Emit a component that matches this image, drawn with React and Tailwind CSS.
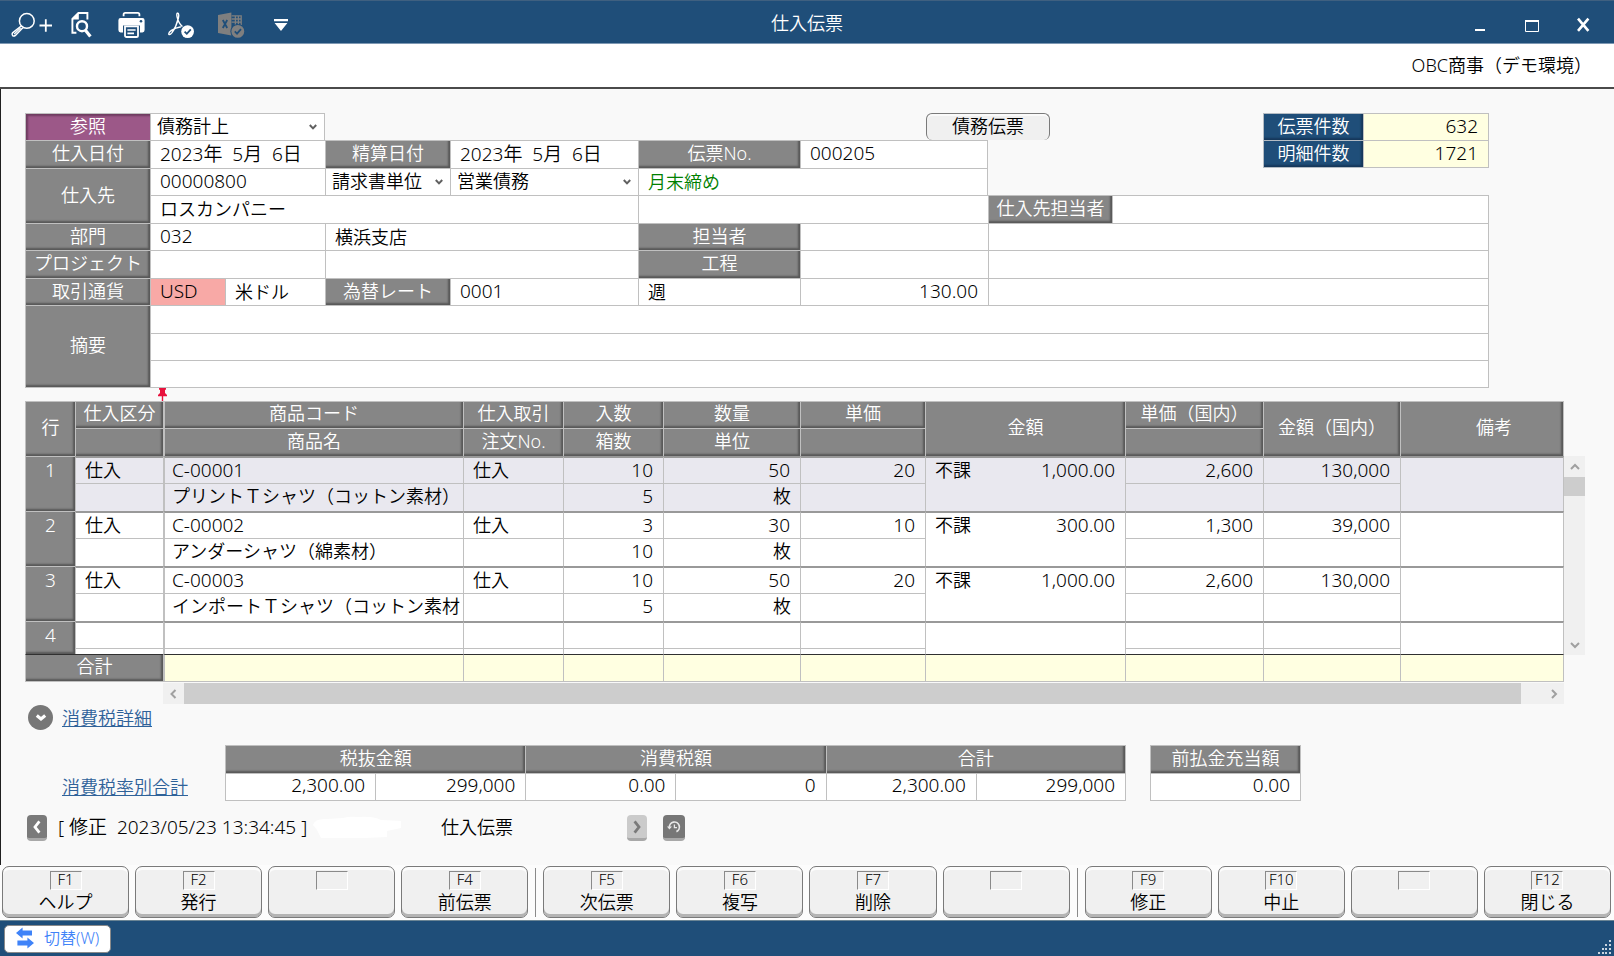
import React from 'react';

const grayHead =
  'bg-[#868686] text-white font-[350] border-t border-l border-[#c0c0c0] shadow-[inset_-3px_-3px_2px_-1px_#585858]';
const blueHead =
  'bg-[#1f4e79] text-white border-t border-l border-[#b4bcc4] shadow-[inset_-3px_-3px_2px_-1px_#16375a]';
const purpleHead =
  'bg-[#9c5888] text-white border-t border-l border-[#c0c0c0] shadow-[inset_3px_3px_2px_-1px_#6f3c60]';

const records = [
  {
    no: 1, kind: '仕入', code: 'C-00001', name: 'プリントＴシャツ（コットン素材）', trade: '仕入',
    per: '10', boxes: '5', qty: '50', unit: '枚', price: '20', tax: '不課', amount: '1,000.00',
    priceJp: '2,600', amountJp: '130,000'
  },
  {
    no: 2, kind: '仕入', code: 'C-00002', name: 'アンダーシャツ（綿素材）', trade: '仕入',
    per: '3', boxes: '10', qty: '30', unit: '枚', price: '10', tax: '不課', amount: '300.00',
    priceJp: '1,300', amountJp: '39,000'
  },
  {
    no: 3, kind: '仕入', code: 'C-00003', name: 'インポートＴシャツ（コットン素材', trade: '仕入',
    per: '10', boxes: '5', qty: '50', unit: '枚', price: '20', tax: '不課', amount: '1,000.00',
    priceJp: '2,600', amountJp: '130,000'
  },
  { no: 4 }
];

const functionKeys = [
  [['F1', 'ヘルプ'], ['F2', '発行'], ['', ''], ['F4', '前伝票']],
  [['F5', '次伝票'], ['F6', '複写'], ['F7', '削除'], ['', '']],
  [['F9', '修正'], ['F10', '中止'], ['', ''], ['F12', '閉じる']]
];

const Label = ({ htmlFor, className, tone = grayHead, children }) => (
  <label htmlFor={htmlFor} className={`flex items-center justify-center pb-[3px] ${tone} ${className}`}>
    {children}
  </label>
);

const Field = ({ id, label, value = '', className = '' }) => (
  <input
    id={id}
    aria-label={label}
    defaultValue={value}
    className={`min-w-0 w-full h-full pl-[9px] pr-[10px] pb-[3px] border-t border-l border-[#c0c0c0] outline-none ${className}`}
  />
);

const Choice = ({ id, label, options, className = '' }) => (
  <div className={`relative border-t border-l border-[#c0c0c0] bg-white ${className}`}>
    <select
      id={id}
      aria-label={label}
      className="block w-full h-full appearance-none bg-transparent pl-[6px] pr-4 pb-[4px] outline-none"
    >
      {options.map((o) => (
        <option key={o}>{o}</option>
      ))}
    </select>
    <svg viewBox="0 0 8 6" className="pointer-events-none absolute right-[7px] top-[10px] h-[6px] w-[8px]" fill="none" stroke="#606060" strokeWidth="2">
      <path d="M0.8 1 L4 4.4 L7.2 1" />
    </svg>
  </div>
);

const TitleBar = () => (
  <header className="relative flex h-[44px] items-center justify-between border-t border-b border-t-[#3f6080] border-b-[#7d98b3] bg-[#1f4e79] pt-[6px] pl-[10px] pr-[22px]">
    <div className="flex items-center">
      <button type="button" aria-label="検索" className="w-[61px]">
        <svg viewBox="0 0 44 28" className="h-[28px] w-[44px]" fill="none" stroke="#fff" strokeWidth="1.5">
          <circle cx="16.8" cy="9.9" r="7.4" />
          <path d="M11.2 15 L2.6 21.8 Q1.4 23.4 2.6 24.6 Q4 25.6 5.4 24.4 L12.8 16.8" />
          <path d="M4.2 23 L10.6 17" strokeWidth="1.2" />
          <path d="M29.5 14.5 H42 M35.8 8.2 V20.8" strokeWidth="1.8" />
        </svg>
      </button>
      <button type="button" aria-label="プレビュー" className="w-[47px]">
        <svg viewBox="0 0 22 28" className="h-[28px] w-[22px]" fill="none" stroke="#fff">
          <path d="M16.4 8.6 V2 H7.4 L1.4 8 V21.8 H5.4" strokeWidth="1.9" />
          <path d="M7.8 1.2 V8.4 H0.8 Z" fill="#fff" stroke="none" />
          <circle cx="11" cy="15.2" r="5" strokeWidth="2.4" />
          <path d="M14.4 19.2 L19.4 25.4" strokeWidth="3.2" />
        </svg>
      </button>
      <button type="button" aria-label="印刷" className="w-[50px]">
        <svg viewBox="0 0 27 28" className="h-[28px] w-[27px]" fill="none" stroke="#fff">
          <path d="M5.6 5.2 V3.4 Q5.6 1.8 7.2 1.8 H19.8 Q21.4 1.8 21.4 3.4 V5.2" strokeWidth="1.8" />
          <path d="M2.6 7 H24.4 Q26.6 7 26.6 9.2 V19 Q26.6 21.4 24.4 21.4 H22 V14.6 H5 V21.4 H2.6 Q0.4 21.4 0.4 19 V9.2 Q0.4 7 2.6 7 Z" fill="#fff" stroke="none" />
          <circle cx="23" cy="10.2" r="1.3" fill="#1f4e79" stroke="none" />
          <path d="M7 15.4 H20 V24.4 Q20 26 18.4 26 H8.6 Q7 26 7 24.4 Z" strokeWidth="1.8" />
          <path d="M9.4 19 H17.6 M9.4 22.4 H16" strokeWidth="1.6" />
        </svg>
      </button>
      <button type="button" aria-label="PDF" className="w-[50px]">
        <svg viewBox="0 0 27 28" className="h-[28px] w-[27px]" fill="none" stroke="#fff">
          <path d="M9.6 2 Q8.2 2.4 9.2 6.4 Q10.6 12.4 14.4 15.6 M9.6 2 Q11.4 2.4 10.4 7 Q8.4 15.6 4 21.6 Q2 24.2 0.9 23.4 Q0.2 21.6 3.4 19.4 Q7.6 16.8 13 15.8" strokeWidth="1.4" />
          <circle cx="19.6" cy="20.6" r="6.4" fill="#fff" stroke="none" />
          <path d="M16.6 20.6 L18.8 22.8 L22.8 18.4" stroke="#1f4e79" strokeWidth="1.8" />
        </svg>
      </button>
      <button type="button" aria-label="Excel" className="w-[56px]">
        <svg viewBox="0 0 27 28" className="h-[28px] w-[27px]" fill="none" stroke="#7f7f7f">
          <path d="M13.6 4.8 H23.2 V14 M13.6 8 H23.2 M13.6 11.2 H23.2 M17.4 4.8 V14 M20.4 4.8 V14" strokeWidth="1.3" />
          <path d="M0 4 L13.4 1.6 V24.4 L0 22 Z" fill="#7f7f7f" stroke="none" />
          <path d="M4.8 9 L9.2 17 M9.2 9 L4.8 17" stroke="#1f4e79" strokeWidth="1.8" />
          <circle cx="19.8" cy="20.4" r="7.4" fill="#1f4e79" stroke="none" />
          <circle cx="19.8" cy="20.4" r="6.4" fill="#7f7f7f" stroke="none" />
          <path d="M16.8 20.4 L19 22.6 L23 18.2" stroke="#1f4e79" strokeWidth="1.8" />
        </svg>
      </button>
      <button type="button" aria-label="メニュー">
        <svg viewBox="0 0 14 13" className="h-[13px] w-[14px]" fill="#fff">
          <path d="M0 0 H14 V2.2 H0 Z M0.6 4 H13.4 L7 12 Z" />
        </svg>
      </button>
    </div>
    <h1 className="pointer-events-none absolute inset-0 text-center leading-[44px] text-white">仕入伝票</h1>
    <div className="flex items-center gap-[36px]">
      <button type="button" aria-label="最小化">
        <svg viewBox="0 0 16 16" className="size-4"><path d="M3 12 H13 V14 H3 Z" fill="#fff" /></svg>
      </button>
      <button type="button" aria-label="最大化">
        <svg viewBox="0 0 16 16" className="size-4" fill="none" stroke="#fff">
          <path d="M1.5 3.5 H14.5 V14.5 H1.5 Z" />
          <path d="M1 4 H15" strokeWidth="2" />
        </svg>
      </button>
      <button type="button" aria-label="閉じる">
        <svg viewBox="0 0 16 16" className="size-4" stroke="#fff" strokeWidth="2.6"><path d="M2 1.6 L12.4 13.8 M12.4 1.6 L2 13.8" /></svg>
      </button>
    </div>
  </header>
);

const SlipForm = () => (
  <form className="mr-[125px] grid grid-cols-[125px_75px_100px_125px_188px_162px_126px_62px_62px_62px_1fr_100px_126px] grid-rows-[repeat(5,27px_28px)]">
    <Label htmlFor="ref" tone={purpleHead} className="col-start-1 row-start-1">参照</Label>
    <Choice id="ref" options={['債務計上']} className="col-start-2 col-span-2 row-start-1 border-r" />
    <button type="button" className="col-start-8 col-span-2 row-start-1 rounded-[6px] border border-b-0 border-[#7a7a7a] bg-[#f0f0f0] pb-[3px] shadow-[inset_0_2px_0_#fafafa]">
      債務伝票
    </button>
    <Label htmlFor="slips" tone={blueHead} className="col-start-12 row-start-1">伝票件数</Label>
    <Field id="slips" value="632" className="col-start-13 row-start-1 border-r bg-[#ffffe1] text-right text-[19px]" />

    <Label htmlFor="date" className="col-start-1 row-start-2">仕入日付</Label>
    <Field id="date" value="2023年  5月  6日" className="col-start-2 col-span-2 row-start-2 bg-white text-[19px]" />
    <Label htmlFor="settle" className="col-start-4 row-start-2">精算日付</Label>
    <Field id="settle" value="2023年  5月  6日" className="col-start-5 row-start-2 bg-white text-[19px]" />
    <Label htmlFor="slipno" className="col-start-6 row-start-2">伝票No.</Label>
    <Field id="slipno" value="000205" className="col-start-7 col-span-2 row-start-2 border-r bg-white text-[19px]" />
    <Label htmlFor="lines" tone={blueHead} className="col-start-12 row-start-2 border-b">明細件数</Label>
    <Field id="lines" value="1721" className="col-start-13 row-start-2 border-r border-b bg-[#ffffe1] text-right text-[19px]" />

    <Label htmlFor="supplier" className="col-start-1 row-start-3 row-span-2">仕入先</Label>
    <Field id="supplier" value="00000800" className="col-start-2 col-span-2 row-start-3 bg-white text-[19px]" />
    <Choice label="請求単位" options={['請求書単位']} className="col-start-4 row-start-3" />
    <Choice label="債務区分" options={['営業債務']} className="col-start-5 row-start-3" />
    <Field label="締日" value="月末締め" className="col-start-6 col-span-3 row-start-3 border-r bg-white text-[#008000]" />
    <Field label="仕入先名" value="ロスカンパニー" className="col-start-2 col-span-4 row-start-4 bg-white" />
    <Field label="仕入先名2" className="col-start-6 col-span-3 row-start-4 bg-white" />
    <Label htmlFor="contact" className="col-start-9 col-span-2 row-start-4">仕入先担当者</Label>
    <Field id="contact" className="col-start-11 col-span-3 row-start-4 border-r bg-white" />

    <Label htmlFor="dept" className="col-start-1 row-start-5">部門</Label>
    <Field id="dept" value="032" className="col-start-2 col-span-2 row-start-5 bg-white text-[19px]" />
    <Field label="部門名" value="横浜支店" className="col-start-4 col-span-2 row-start-5 bg-white" />
    <Label htmlFor="staff" className="col-start-6 row-start-5">担当者</Label>
    <Field id="staff" className="col-start-7 col-span-2 row-start-5 bg-white" />
    <Field label="担当者名" className="col-start-9 col-span-5 row-start-5 border-r bg-white" />

    <Label htmlFor="project" className="col-start-1 row-start-6">プロジェクト</Label>
    <Field id="project" className="col-start-2 col-span-2 row-start-6 bg-white" />
    <Field label="プロジェクト名" className="col-start-4 col-span-2 row-start-6 bg-white" />
    <Label htmlFor="process" className="col-start-6 row-start-6">工程</Label>
    <Field id="process" className="col-start-7 col-span-2 row-start-6 bg-white" />
    <Field label="工程名" className="col-start-9 col-span-5 row-start-6 border-r bg-white" />

    <Label htmlFor="currency" className="col-start-1 row-start-7">取引通貨</Label>
    <Field id="currency" value="USD" className="col-start-2 row-start-7 bg-[#f8a9a6] text-[19px]" />
    <Field label="通貨名" value="米ドル" className="col-start-3 row-start-7 bg-white" />
    <Label htmlFor="rate" className="col-start-4 row-start-7">為替レート</Label>
    <Field id="rate" value="0001" className="col-start-5 row-start-7 bg-white text-[19px]" />
    <Field label="レート区分" value="週" className="col-start-6 row-start-7 bg-white" />
    <Field label="レート" value="130.00" className="col-start-7 col-span-2 row-start-7 bg-white text-right text-[19px]" />
    <Field label="レート備考" className="col-start-9 col-span-5 row-start-7 border-r bg-white" />

    <Label htmlFor="note" className="col-start-1 row-start-8 row-span-3 border-b">摘要</Label>
    <Field id="note" className="col-start-2 col-span-12 row-start-8 border-r bg-white" />
    <Field label="摘要2" className="col-start-2 col-span-12 row-start-9 border-r bg-white" />
    <Field label="摘要3" className="col-start-2 col-span-12 row-start-10 border-r border-b bg-white" />
  </form>
);

const Cell = ({ first, className = 'px-[9px]', children, ...rest }) => (
  <td
    {...rest}
    className={`border-l py-0 align-top whitespace-nowrap ${
      first ? 'border-t-2 border-t-[#999] border-x-[#c0c0c0]' : 'border-t border-[#c0c0c0]'
    } ${className}`}
  >
    {children}
  </td>
);

const RecordRows = ({ r }) => {
  const last = r.no === 4;
  const tint = r.no === 1 ? 'bg-[#e9e8ef]' : 'bg-white';
  const number = 'px-[10px] text-right text-[19px]';
  return (
    <tbody className={`${tint} leading-[24px]`}>
      <tr className="h-[27px]">
        <th scope="row" rowSpan={2} className={`${grayHead} p-0 align-top text-[19px] leading-[26px]`}>{r.no}</th>
        <Cell first>{r.kind}</Cell>
        <Cell first className="border-l-2 pl-[7px] text-[19px]">{r.code}</Cell>
        <Cell first>{r.trade}</Cell>
        <Cell first className={number}>{r.per}</Cell>
        <Cell first className={number}>{r.qty}</Cell>
        <Cell first className={number}>{r.price}</Cell>
        <Cell first rowSpan={2} className="pl-[9px] pr-[10px]">
          <div className="flex justify-between">
            <span>{r.tax}</span>
            <span className="text-[19px]">{r.amount}</span>
          </div>
        </Cell>
        <Cell first className={number}>{r.priceJp}</Cell>
        <Cell first className={number}>{r.amountJp}</Cell>
        <Cell first rowSpan={2} className="border-r" />
      </tr>
      <tr className={last ? 'h-[6px]' : 'h-[28px]'}>
        <Cell />
        <Cell className="border-l-2 pl-[7px]">{r.name}</Cell>
        <Cell />
        <Cell className={number}>{r.boxes}</Cell>
        <Cell className="px-[9px] text-right">{r.unit}</Cell>
        <Cell />
        <Cell />
        <Cell />
      </tr>
    </tbody>
  );
};

const Chevron = ({ d }) => (
  <svg viewBox="0 0 10 10" className="size-[10px]" fill="none" stroke="#a0a0a0" strokeWidth="2"><path d={d} /></svg>
);

const DetailGrid = () => (
  <div className="flex items-start pr-[29px]">
    <div className="min-w-0 flex-1">
      <table className="w-full table-fixed border-separate border-spacing-0">
        <colgroup>
          <col className="w-[50px]" />
          <col className="w-[88px]" />
          <col className="w-[300px]" />
          <col className="w-[100px]" />
          <col className="w-[100px]" />
          <col className="w-[137px]" />
          <col className="w-[125px]" />
          <col className="w-[200px]" />
          <col className="w-[138px]" />
          <col className="w-[137px]" />
          <col />
        </colgroup>
        <thead className="leading-[21px]">
          <tr className="h-[27px]">
            <th rowSpan={2} className={`${grayHead} p-0 pb-[3px]`}>行</th>
            <th className={`${grayHead} p-0 pb-[3px]`}>仕入区分</th>
            <th className={`${grayHead} border-l-2 p-0 pb-[3px]`}>商品コード</th>
            <th className={`${grayHead} p-0 pb-[3px]`}>仕入取引</th>
            <th className={`${grayHead} p-0 pb-[3px]`}>入数</th>
            <th className={`${grayHead} p-0 pb-[3px]`}>数量</th>
            <th className={`${grayHead} p-0 pb-[3px]`}>単価</th>
            <th rowSpan={2} className={`${grayHead} p-0 pb-[3px]`}>金額</th>
            <th className={`${grayHead} p-0 pb-[3px]`}>単価（国内）</th>
            <th rowSpan={2} className={`${grayHead} p-0 pb-[3px]`}>金額（国内）</th>
            <th rowSpan={2} className={`${grayHead} border-r p-0 pb-[3px] pl-[24px]`}>備考</th>
          </tr>
          <tr className="h-[28px]">
            <th className={`${grayHead} p-0`} />
            <th className={`${grayHead} border-l-2 p-0 pb-[3px]`}>商品名</th>
            <th className={`${grayHead} p-0 pb-[3px]`}>注文No.</th>
            <th className={`${grayHead} p-0 pb-[3px]`}>箱数</th>
            <th className={`${grayHead} p-0 pb-[3px]`}>単位</th>
            <th className={`${grayHead} p-0`} />
            <th className={`${grayHead} p-0`} />
          </tr>
        </thead>
        {records.map((r) => (
          <RecordRows key={r.no} r={r} />
        ))}
        <tfoot className="leading-[21px]">
          <tr className="h-[28px]">
            <th scope="row" colSpan={2} className={`${grayHead} border-b border-t-[#303030] p-0 pb-[3px]`}>合計</th>
            <td className="border-t border-b border-l-2 border-[#c0c0c0] border-t-[#303030] bg-[#ffffe1]" />
            {[4, 5, 6, 7, 8, 9, 10].map((c) => (
              <td key={c} className="border-t border-b border-l border-[#c0c0c0] border-t-[#303030] bg-[#ffffe1]" />
            ))}
            <td className="border border-[#c0c0c0] border-t-[#303030] bg-[#ffffe1]" />
          </tr>
        </tfoot>
      </table>
      <div className="ml-[138px] mt-px flex h-[21px] bg-[#f0f0f0]">
        <button type="button" aria-label="左へ" className="flex w-[21px] items-center justify-center"><Chevron d="M6.5 1 L2.5 5 L6.5 9" /></button>
        <div className="mr-[22px] flex-1 bg-[#cdcdcd]" />
        <button type="button" aria-label="右へ" className="flex w-[21px] items-center justify-center"><Chevron d="M3 1 L7 5 L3 9" /></button>
      </div>
    </div>
    <div className="mt-[55px] flex h-[199px] w-[21px] flex-col bg-[#f0f0f0]">
      <button type="button" aria-label="上へ" className="flex h-[21px] items-center justify-center"><Chevron d="M1 7 L5 3 L9 7" /></button>
      <div className="h-[19px] bg-[#cdcdcd]" />
      <div className="flex-1" />
      <button type="button" aria-label="下へ" className="flex h-[21px] items-center justify-center"><Chevron d="M1 3 L5 7 L9 3" /></button>
    </div>
  </div>
);

const sumCell = 'h-[28px] border-t border-b border-l border-[#c0c0c0] bg-white px-[10px] pt-0 pb-[3px] text-right text-[19px] leading-[21px]';

const Totals = () => (
  <section>
    <div className="mt-px flex h-[25px] items-center gap-[9px] pl-[3px]">
      <button type="button" aria-label="消費税詳細を開く" className="flex size-[25px] items-center justify-center rounded-full bg-[#777]">
        <svg viewBox="0 0 12 8" className="h-[8px] w-[12px]" fill="none" stroke="#fff" strokeWidth="3.2"><path d="M1.8 1.6 L6 5 L10.2 1.6" /></svg>
      </button>
      <a href="#tax-detail" className="text-[#2f6299] underline">消費税詳細</a>
    </div>
    <div className="mt-[15px] flex items-end">
      <div className="flex h-[28px] w-[200px] items-center pl-[37px]">
        <a href="#tax-rate" className="text-[#2f6299] underline">消費税率別合計</a>
      </div>
      <table className="w-[901px] table-fixed border-separate border-spacing-0">
        <thead>
          <tr className="h-[28px] leading-[21px]">
            <th colSpan={2} className={`${grayHead} p-0 pb-[3px]`}>税抜金額</th>
            <th colSpan={2} className={`${grayHead} p-0 pb-[3px]`}>消費税額</th>
            <th colSpan={2} className={`${grayHead} border-r p-0 pb-[3px]`}>合計</th>
          </tr>
        </thead>
        <tbody>
          <tr>
            <td className={sumCell}>2,300.00</td>
            <td className={sumCell}>299,000</td>
            <td className={sumCell}>0.00</td>
            <td className={sumCell}>0</td>
            <td className={sumCell}>2,300.00</td>
            <td className={`${sumCell} border-r`}>299,000</td>
          </tr>
        </tbody>
      </table>
      <table className="ml-[24px] w-[151px] table-fixed border-separate border-spacing-0">
        <thead>
          <tr className="h-[28px] leading-[21px]">
            <th className={`${grayHead} border-r p-0 pb-[3px]`}>前払金充当額</th>
          </tr>
        </thead>
        <tbody>
          <tr>
            <td className={`${sumCell} border-r`}>0.00</td>
          </tr>
        </tbody>
      </table>
    </div>
  </section>
);

const History = () => (
  <div className="mt-[14px] flex h-[26px] items-center pl-[2px]">
    <button type="button" aria-label="前の履歴" className="flex h-[26px] w-[20px] items-center justify-center rounded-[4px] border-b-[3px] border-[#a8a8a8] bg-[#7a7a7a]">
      <svg viewBox="0 0 10 14" className="h-[14px] w-[10px]" fill="none" stroke="#fff" strokeWidth="2.8"><path d="M7.4 1.4 L3 7 L7.4 12.6" /></svg>
    </button>
    <p className="w-[266px] pb-[3px] pl-[11px] text-[19px] whitespace-pre">[ 修正  2023/05/23 13:34:45 ]</p>
    <svg viewBox="0 0 88 24" className="h-[24px] w-[88px]" fill="#fff">
      <path d="M0 9 Q2 2 14 3 L30 2 Q36 0 46 1 Q60 0 68 4 L88 5 V12 L74 15 V21 L52 22 L8 22 L4 14 Z" />
    </svg>
    <span className="w-[216px] pb-[3px] pl-[40px]">仕入伝票</span>
    <button type="button" aria-label="次の履歴" className="mx-[10px] flex h-[26px] w-[20px] items-center justify-center rounded-[4px] border-b-[3px] border-[#a8a8a8] bg-[#cbcbcb]">
      <svg viewBox="0 0 10 14" className="h-[14px] w-[10px]" fill="none" stroke="#7a7a7a" strokeWidth="2.8"><path d="M2.6 1.4 L7 7 L2.6 12.6" /></svg>
    </button>
    <button type="button" aria-label="履歴" className="ml-[6px] flex h-[26px] w-[22px] items-center justify-center rounded-[4px] border-b-[3px] border-[#a8a8a8] bg-[#777]">
      <svg viewBox="0 0 14 14" className="size-[14px]" fill="none" stroke="#e8e8e8" strokeWidth="1.7">
        <path d="M2.4 7.4 A5 5 0 1 1 9.4 11.6" />
        <path d="M0 6.4 H5 L2.4 9.6 Z" fill="#e8e8e8" stroke="none" />
        <path d="M7.4 4.6 V7.6 H10" strokeWidth="1.3" />
      </svg>
    </button>
  </div>
);

const FunctionBar = () => (
  <nav className="flex h-[55px] gap-[7px] bg-[#fcfcfc] py-px pl-[2px] pr-[3px]">
    {functionKeys.map((group, g) => (
      <React.Fragment key={g}>
        {g > 0 && <div className="my-[2px] w-px bg-[#8a8a8a]" />}
        <div className="grid flex-1 grid-cols-4 gap-[6px]">
          {group.map(([key, name], i) => (
            <button
              key={i}
              type="button"
              aria-label={name || '未使用'}
              className="flex h-[52px] flex-col items-center rounded-[7px] border border-[#7a7a7a] bg-[#f0f0f0] pt-[4px] shadow-[inset_0_3px_0_#fcfcfc,inset_0_-3px_0_#b4b4b4]"
            >
              <span className="h-[19px] w-[32px] border border-t-[#8a8a8a] border-r-white border-b-white border-l-[#8a8a8a] text-[15px] leading-[14px]">
                {key}
              </span>
              <span className="leading-[25px]">{name}</span>
            </button>
          ))}
        </div>
      </React.Fragment>
    ))}
  </nav>
);

export default function App() {
  return (
    <div className="flex min-h-screen flex-col bg-[#f9f9f9] font-['Noto_Sans','Noto_Sans_CJK_JP',sans-serif] text-[18px] leading-[24px] font-[350] text-black">
      <TitleBar />
      <div className="flex h-[45px] items-center justify-end border-b-2 border-[#4a4a4a] bg-white pr-[22px] pb-px">
        OBC商事（デモ環境）
      </div>
      <main className="flex-1 border-l border-[#202020] pl-[24px] pt-[24px]">
        <SlipForm />
        <div className="flex h-[13px] items-end pl-[133px]">
          <svg viewBox="0 0 9 13" className="h-[13px] w-[9px]" fill="#e8113c">
            <path d="M1 0 H8 V1.8 H7 V5 L9 7 V8.2 H5.2 V13 H3.8 V8.2 H0 V7 L2 5 V1.8 H1 Z" />
          </svg>
        </div>
        <DetailGrid />
        <Totals />
        <History />
      </main>
      <FunctionBar />
      <footer className="flex h-[36px] items-center justify-between border-t border-[#6a8494] bg-[#1f4e79] pl-[4px] pr-[2px]">
        <button type="button" className="flex h-[28px] items-center gap-[10px] rounded-[5px] border border-[#8a8a8a] bg-white px-[11px] pb-[2px] text-[16px] text-[#3f83f8]">
          <svg viewBox="0 0 18 22" className="h-[22px] w-[18px]" fill="#3f83f8">
            <path d="M0 6 L6.6 0.6 V3.4 H16 V8.6 H6.6 V11.4 Z M18 16 L11.4 10.6 V13.4 H1.4 V18.6 H11.4 V21.4 Z" />
          </svg>
          切替(W)
        </button>
        <svg viewBox="0 0 14 14" className="mt-[16px] size-[14px]" fill="#c8d4e0">
          <path d="M11 0h2v2h-2zM11 4h2v2h-2zM7 4h2v2h-2zM11 8h2v2h-2zM7 8h2v2h-2zM4 8h2v2h-2zM11 12h2v2h-2zM7 12h2v2h-2zM4 12h2v2h-2zM0 12h2v2h-2z" />
        </svg>
      </footer>
    </div>
  );
}
